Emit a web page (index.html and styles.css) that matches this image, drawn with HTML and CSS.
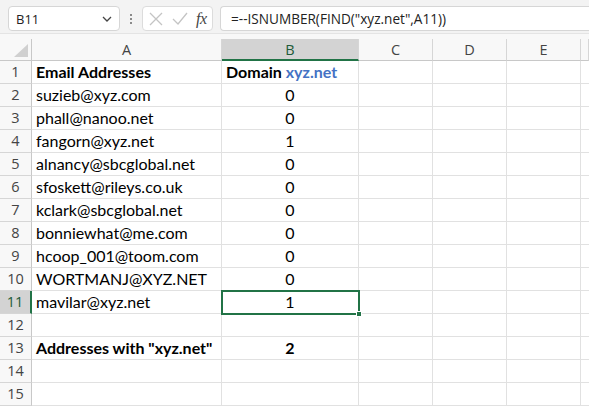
FILE: index.html
```html
<!DOCTYPE html>
<html>
<head>
<meta charset="utf-8">
<link rel="stylesheet" href="styles.css">
</head>
<body>
<div class="app">
  <div class="topbar">
    <div class="namebox">
      <span class="ref">B11</span>
      <svg class="chev" width="10" height="6" viewBox="0 0 10 6"><path d="M1 1 L5 5 L9 1" fill="none" stroke="#444" stroke-width="1.3"/></svg>
    </div>
    <div class="dots"><span></span><span></span><span></span></div>
    <div class="fxbox">
      <svg class="ico" width="14" height="14" viewBox="0 0 14 14"><path d="M1 1 L13 13 M13 1 L1 13" stroke="#c4c4c4" stroke-width="1.3" fill="none"/></svg>
      <svg class="ico" width="16" height="14" viewBox="0 0 16 14"><path d="M1 7 L6 12 L15 1" stroke="#c4c4c4" stroke-width="1.3" fill="none"/></svg>
      <span class="fx">fx</span>
    </div>
    <div class="formula">=--ISNUMBER(FIND("xyz.net",A11))</div>
  </div>
  <div class="gap"></div>
  <div class="sheet">
    <div class="corner"><span class="tri"></span></div>
    <div class="ch">A</div>
    <div class="ch selh">B</div>
    <div class="ch">C</div>
    <div class="ch">D</div>
    <div class="ch">E</div>
    <div class="ch"></div>

    <div class="rh">1</div><div class="c b">Email Addresses</div><div class="c b">Domain <span class="blue">xyz.net</span></div><div class="c"></div><div class="c"></div><div class="c"></div><div class="c"></div>
    <div class="rh">2</div><div class="c">suzieb@xyz.com</div><div class="c n">0</div><div class="c"></div><div class="c"></div><div class="c"></div><div class="c"></div>
    <div class="rh">3</div><div class="c">phall@nanoo.net</div><div class="c n">0</div><div class="c"></div><div class="c"></div><div class="c"></div><div class="c"></div>
    <div class="rh">4</div><div class="c">fangorn@xyz.net</div><div class="c n">1</div><div class="c"></div><div class="c"></div><div class="c"></div><div class="c"></div>
    <div class="rh">5</div><div class="c">alnancy@sbcglobal.net</div><div class="c n">0</div><div class="c"></div><div class="c"></div><div class="c"></div><div class="c"></div>
    <div class="rh">6</div><div class="c">sfoskett@rileys.co.uk</div><div class="c n">0</div><div class="c"></div><div class="c"></div><div class="c"></div><div class="c"></div>
    <div class="rh">7</div><div class="c">kclark@sbcglobal.net</div><div class="c n">0</div><div class="c"></div><div class="c"></div><div class="c"></div><div class="c"></div>
    <div class="rh">8</div><div class="c">bonniewhat@me.com</div><div class="c n">0</div><div class="c"></div><div class="c"></div><div class="c"></div><div class="c"></div>
    <div class="rh">9</div><div class="c">hcoop_001@toom.com</div><div class="c n">0</div><div class="c"></div><div class="c"></div><div class="c"></div><div class="c"></div>
    <div class="rh">10</div><div class="c">WORTMANJ@XYZ.NET</div><div class="c n">0</div><div class="c"></div><div class="c"></div><div class="c"></div><div class="c"></div>
    <div class="rh selr">11</div><div class="c">mavilar@xyz.net</div><div class="c n sel">1<span class="handle"></span></div><div class="c"></div><div class="c"></div><div class="c"></div><div class="c"></div>
    <div class="rh">12</div><div class="c"></div><div class="c"></div><div class="c"></div><div class="c"></div><div class="c"></div><div class="c"></div>
    <div class="rh">13</div><div class="c b">Addresses with "xyz.net"</div><div class="c n b">2</div><div class="c"></div><div class="c"></div><div class="c"></div><div class="c"></div>
    <div class="rh">14</div><div class="c"></div><div class="c"></div><div class="c"></div><div class="c"></div><div class="c"></div><div class="c"></div>
    <div class="rh">15</div><div class="c"></div><div class="c"></div><div class="c"></div><div class="c"></div><div class="c"></div><div class="c"></div>
  </div>
</div>
</body>
</html>
```

FILE: styles.css
```css
* { box-sizing: border-box; }
html, body { margin: 0; padding: 0; }
body { width: 589px; height: 409px; overflow: hidden; background: #fff; }
.app { width: 589px; }

.topbar {
  height: 33px;
  background: #f3f3f3;
  display: flex;
  align-items: flex-start;
  padding: 6px 0 0 8px;
  font-family: "Open Sans", "Noto Sans", sans-serif;
}
.namebox {
  width: 112px; height: 25px;
  background: #fff;
  border: 1px solid #d6d6d6;
  border-radius: 4px;
  display: flex; align-items: center; justify-content: space-between;
  padding: 0 7px 0 7px;
  font-size: 13px; color: #222;
}
.chev { margin-top: 1px; }
.dots {
  width: 22px; height: 25px;
  display: flex; flex-direction: column; align-items: center; justify-content: center; gap: 2px;
}
.dots span { width: 2px; height: 2px; background: #8a8a8a; display: block; }
.fxbox {
  width: 71px; height: 25px;
  background: #fff;
  border: 1px solid #dcdcdc;
  border-radius: 4px;
  display: flex; align-items: center;
  padding: 0 0 0 6px; gap: 9px;
}
.fx {
  font-family: "Liberation Serif", "DejaVu Serif", serif;
  font-style: italic; font-size: 16px; color: #444;
  margin-left: -1px; letter-spacing: -0.5px;
}
.formula {
  margin-left: 7px;
  flex: 1;
  height: 25px;
  background: #fff;
  border: 1px solid #d6d6d6;
  border-right: none;
  border-radius: 4px 0 0 4px;
  padding: 0 0 0 10px;
  font-size: 13.6px; line-height: 23px; color: #222;
  white-space: nowrap;
}
.gap { height: 6px; background: #f8f8f8; border-top: 1px solid #e4e4e4; }

.sheet {
  display: grid;
  grid-template-columns: 32px 190px 137px 74px 74px 74px 8px;
  grid-template-rows: 22px;
  grid-auto-rows: 23px;
  font-family: "Lato", "Open Sans", sans-serif;
  font-size: 16px;
  color: #000;
}
.corner, .ch, .rh { background: #f8f8f8; }
.corner {
  border-right: 1px solid #c8c8c8;
  border-bottom: 1px solid #c8c8c8;
  position: relative;
}
.tri {
  position: absolute; right: 3px; bottom: 3px;
  width: 0; height: 0;
  border-left: 14px solid transparent;
  border-bottom: 13px solid #d0d0d0;
}
.ch {
  border-right: 1px solid #d6d6d6;
  border-bottom: 1px solid #c8c8c8;
  text-align: center;
  color: #444;
  line-height: 21px;
  font-family: "Open Sans", sans-serif;
  font-size: 14.5px;
}
.ch.selh {
  background: #d3d3d3;
  border-bottom: 2px solid #217346;
  color: #1e5b39;
}
.rh {
  border-right: 1px solid #c8c8c8;
  border-bottom: 1px solid #d6d6d6;
  text-align: center;
  color: #444;
  line-height: 22px;
  font-family: "Open Sans", sans-serif;
  font-size: 14.5px;
}
.rh.selr {
  background: #d3d3d3;
  border-right: 2px solid #217346;
  color: #1e5b39;
}
.c {
  border-right: 1px solid #e1e1e1;
  border-bottom: 1px solid #e1e1e1;
  padding: 0 4px;
  line-height: 22px;
  white-space: nowrap;
  overflow: visible;
}
.c.n { text-align: center; }
.c.b { font-weight: bold; }
.blue { color: #4472c4; }
.c.sel {
  position: relative;
  outline: 2px solid #217346;
  outline-offset: -1px;
}
.handle {
  position: absolute;
  right: -4px; bottom: -4px;
  width: 6px; height: 6px;
  background: #217346;
  border: 1px solid #fff;
}
```
